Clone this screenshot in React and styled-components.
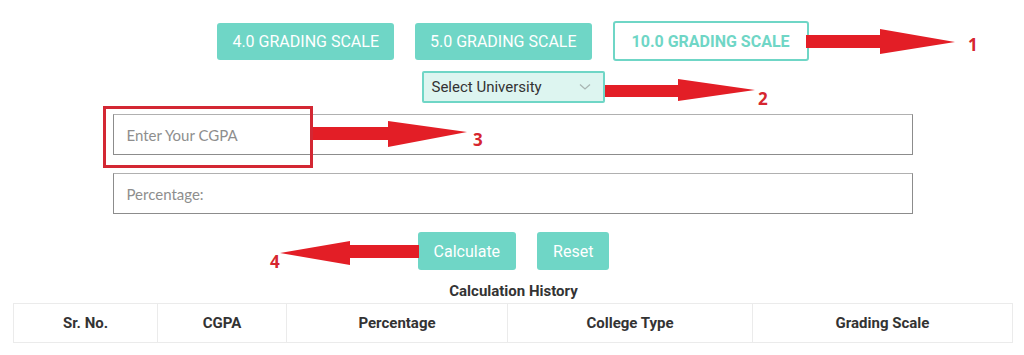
import styled, { createGlobalStyle } from "styled-components";

const TEAL = "#6fd6c6";
const RED = "#e31e26";

const GlobalStyle = createGlobalStyle`
  body {
    margin: 0;
    background: #ffffff;
    font-family: Roboto, "Liberation Sans", Arial, sans-serif;
  }
`;

const scales = ["4.0 GRADING SCALE", "5.0 GRADING SCALE", "10.0 GRADING SCALE"];

const columns = [
  { label: "Sr. No.", width: 144 },
  { label: "CGPA", width: 129 },
  { label: "Percentage", width: 221 },
  { label: "College Type", width: 245 },
  { label: "Grading Scale", width: 260 },
];

// annotation arrows: bar from x0 to x1 (top t, bottom b), head from x1 (ht..hb) to tip (tx, ty)
const arrows = [
  { x0: 806, x1: 880, t: 35, b: 48, ht: 29, hb: 54, tx: 955, ty: 42 },
  { x0: 605, x1: 678, t: 85, b: 97, ht: 79, hb: 101, tx: 755, ty: 90 },
  { x0: 313, x1: 388, t: 127, b: 140, ht: 121, hb: 147, tx: 467, ty: 132 },
  { x0: 419, x1: 350, t: 245, b: 258, ht: 241, hb: 265, tx: 280, ty: 253 },
];

const labels = [
  { text: "1", x: 968, y: 35 },
  { text: "2", x: 758, y: 89 },
  { text: "3", x: 473, y: 130 },
  { text: "4", x: 270, y: 252 },
];

export default function App() {
  return (
    <>
      <GlobalStyle />
      <Page>
        <ScaleRow>
          {scales.map((scale, i) => (
            <ScaleButton key={scale} $active={i === scales.length - 1}>
              {scale}
            </ScaleButton>
          ))}
        </ScaleRow>

        <SelectRow>
          <UniversitySelect>
            <span>Select University</span>
            <svg width="12" height="8" viewBox="0 0 12 8">
              <path d="M1 1.5 L6 6 L11 1.5" fill="none" stroke="#a8b5b2" strokeWidth="1.3" />
            </svg>
          </UniversitySelect>
        </SelectRow>

        <Form>
          <Field placeholder="Enter Your CGPA" />
          <Field placeholder="Percentage:" />
        </Form>

        <Actions>
          <ActionButton>Calculate</ActionButton>
          <ActionButton>Reset</ActionButton>
        </Actions>

        <HistoryTitle>Calculation History</HistoryTitle>

        <HistoryTable>
          <colgroup>
            {columns.map((c) => (
              <col key={c.label} style={{ width: c.width }} />
            ))}
          </colgroup>
          <thead>
            <tr>
              {columns.map((c) => (
                <Th key={c.label}>{c.label}</Th>
              ))}
            </tr>
          </thead>
        </HistoryTable>

        <Overlay width="1024" height="355" viewBox="0 0 1024 355">
          {arrows.map((a, i) => (
            <polygon
              key={i}
              fill={RED}
              points={`${a.x0},${a.t} ${a.x1},${a.t} ${a.x1},${a.ht} ${a.tx},${a.ty} ${a.x1},${a.hb} ${a.x1},${a.b} ${a.x0},${a.b}`}
            />
          ))}
        </Overlay>
        <HighlightBox />
        {labels.map((l) => (
          <Marker key={l.text} style={{ left: l.x, top: l.y }}>
            {l.text}
          </Marker>
        ))}
      </Page>
    </>
  );
}

const Page = styled.div`
  position: relative;
  width: 1024px;
  height: 355px;
  padding-top: 21px;
  box-sizing: border-box;
  overflow: hidden;
`;

const ScaleRow = styled.div`
  display: flex;
  justify-content: center;
  align-items: center;
  gap: 21px;
  padding-left: 2px;
`;

const ScaleButton = styled.button`
  height: ${(p) => (p.$active ? "40px" : "37px")};
  padding: 0 ${(p) => (p.$active ? "17px" : "15px")};
  border: ${(p) => (p.$active ? `2px solid ${TEAL}` : "none")};
  border-radius: 3px;
  background: ${(p) => (p.$active ? "#ffffff" : TEAL)};
  color: ${(p) => (p.$active ? TEAL : "#ffffff")};
  font-family: Roboto, "Liberation Sans", Arial, sans-serif;
  font-size: 16px;
  font-weight: ${(p) => (p.$active ? 700 : 400)};
  cursor: pointer;
`;

const SelectRow = styled.div`
  display: flex;
  justify-content: center;
  margin-top: 10px;
`;

const UniversitySelect = styled.div`
  width: 183px;
  height: 32px;
  box-sizing: border-box;
  display: flex;
  align-items: center;
  justify-content: space-between;
  padding: 0 12px 0 8px;
  background: #ddf5f0;
  border: 2px solid ${TEAL};
  border-radius: 2px;
  color: #333333;
  font-size: 15px;
  margin-left: 2px;
`;

const Form = styled.div`
  width: 800px;
  margin: 11px auto 0;
  display: flex;
  flex-direction: column;
  gap: 18px;
  padding-left: 1px;
`;

const Field = styled.input`
  height: 41px;
  box-sizing: border-box;
  border: 1px solid #8c8c8c;
  border-top-color: #b0b0b0;
  padding: 0 13px;
  font-family: Lato, "Open Sans", sans-serif;
  font-size: 15px;
  color: #555555;
  outline: none;

  &::placeholder {
    color: #8e8e8e;
  }
`;

const Actions = styled.div`
  display: flex;
  justify-content: center;
  gap: 21px;
  margin-top: 18px;
  padding-left: 3px;
`;

const ActionButton = styled.button`
  height: 38px;
  padding: 0 16px;
  border: none;
  border-radius: 3px;
  background: ${TEAL};
  color: #ffffff;
  font-family: Roboto, "Liberation Sans", Arial, sans-serif;
  font-size: 16px;
  cursor: pointer;
`;

const HistoryTitle = styled.div`
  margin-top: 12px;
  text-align: center;
  font-size: 15px;
  font-weight: 700;
  color: #333333;
  padding-left: 3px;
`;

const HistoryTable = styled.table`
  width: 999px;
  margin: 3px 0 0 13px;
  border-collapse: collapse;
  table-layout: fixed;
`;

const Th = styled.th`
  height: 38px;
  border: 1px solid #ebebeb;
  font-size: 15px;
  font-weight: 700;
  color: #333333;
  text-align: center;
  padding: 0;
`;

const Overlay = styled.svg`
  position: absolute;
  left: 0;
  top: 0;
  pointer-events: none;
`;

const HighlightBox = styled.div`
  position: absolute;
  left: 103px;
  top: 106px;
  width: 210px;
  height: 62px;
  box-sizing: border-box;
  border: 3px solid #d32733;
  pointer-events: none;
`;

const Marker = styled.span`
  position: absolute;
  color: #d6262f;
  font-family: "Open Sans", "Liberation Sans", sans-serif;
  font-size: 17px;
  font-weight: 700;
  line-height: 20px;
`;
